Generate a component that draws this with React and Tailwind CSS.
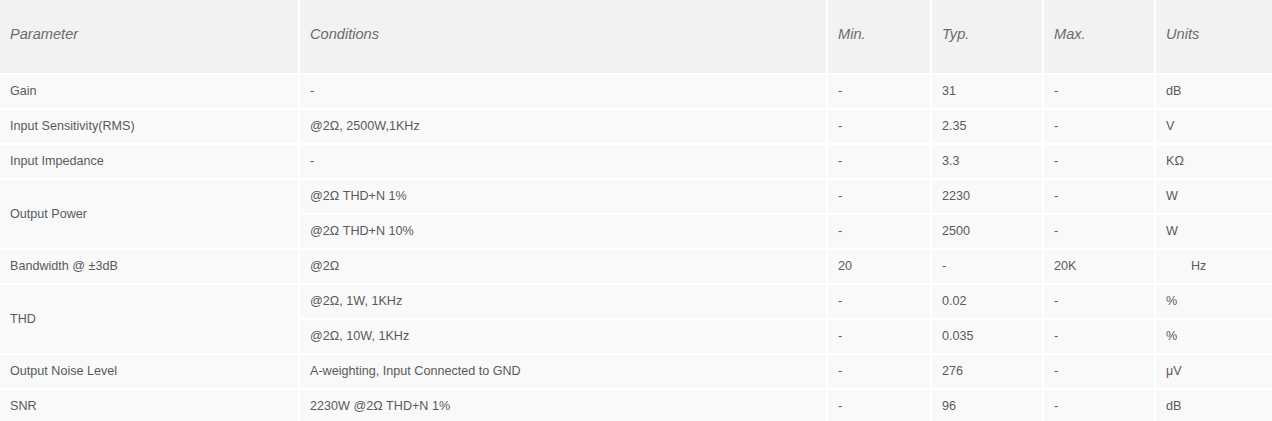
const rows = [
  { p: 'Gain', c: '-', min: '-', typ: '31', max: '-', u: 'dB' },
  { p: 'Input Sensitivity(RMS)', c: '@2Ω, 2500W,1KHz', min: '-', typ: '2.35', max: '-', u: 'V' },
  { p: 'Input Impedance', c: '-', min: '-', typ: '3.3', max: '-', u: 'KΩ' },
  { p: 'Output Power', span: 2, c: '@2Ω THD+N 1%', min: '-', typ: '2230', max: '-', u: 'W' },
  { c: '@2Ω THD+N 10%', min: '-', typ: '2500', max: '-', u: 'W' },
  { p: 'Bandwidth @ ±3dB', c: '@2Ω', min: '20', typ: '-', max: '20K', u: 'Hz', indent: true },
  { p: 'THD', span: 2, c: '@2Ω, 1W, 1KHz', min: '-', typ: '0.02', max: '-', u: '%' },
  { c: '@2Ω, 10W, 1KHz', min: '-', typ: '0.035', max: '-', u: '%' },
  { p: 'Output Noise Level', c: 'A-weighting, Input Connected to GND', min: '-', typ: '276', max: '-', u: 'μV' },
  { p: 'SNR', c: '2230W @2Ω THD+N 1%', min: '-', typ: '96', max: '-', u: 'dB' },
];

const td = 'h-[35px] border-b-2 border-r-2 border-white bg-[#f9f9f9] px-[10px] align-middle';
const th = 'h-[75px] border-b-2 border-r-2 border-white bg-[#f2f2f2] px-[10px] pb-[4px] text-left align-middle font-normal italic';

export default function App() {
  return (
    <div className="w-[1272px] h-[421px] overflow-hidden bg-white font-['Liberation_Sans',Arial,sans-serif] text-[#595959]">
      <table className="w-[1274px] table-fixed border-separate border-spacing-0">
        <colgroup>
          <col className="w-[300px]" />
          <col className="w-[528px]" />
          <col className="w-[104px]" />
          <col className="w-[112px]" />
          <col className="w-[112px]" />
          <col className="w-[118px]" />
        </colgroup>
        <thead>
          <tr className="text-[14.6px] text-[#6b6b6b]">
            <th className={th}>Parameter</th>
            <th className={th}>Conditions</th>
            <th className={th}>Min.</th>
            <th className={th}>Typ.</th>
            <th className={th}>Max.</th>
            <th className={th}>Units</th>
          </tr>
        </thead>
        <tbody className="text-[12.6px]">
          {rows.map((r, i) => (
            <tr key={i}>
              {r.p && (
                <td rowSpan={r.span || 1} className={td}>
                  {r.p}
                </td>
              )}
              <td className={td}>{r.c}</td>
              <td className={td}>{r.min}</td>
              <td className={td}>{r.typ}</td>
              <td className={td}>{r.max}</td>
              <td className={td + (r.indent ? ' pl-[35px]' : '')}>{r.u}</td>
            </tr>
          ))}
        </tbody>
      </table>
    </div>
  );
}
